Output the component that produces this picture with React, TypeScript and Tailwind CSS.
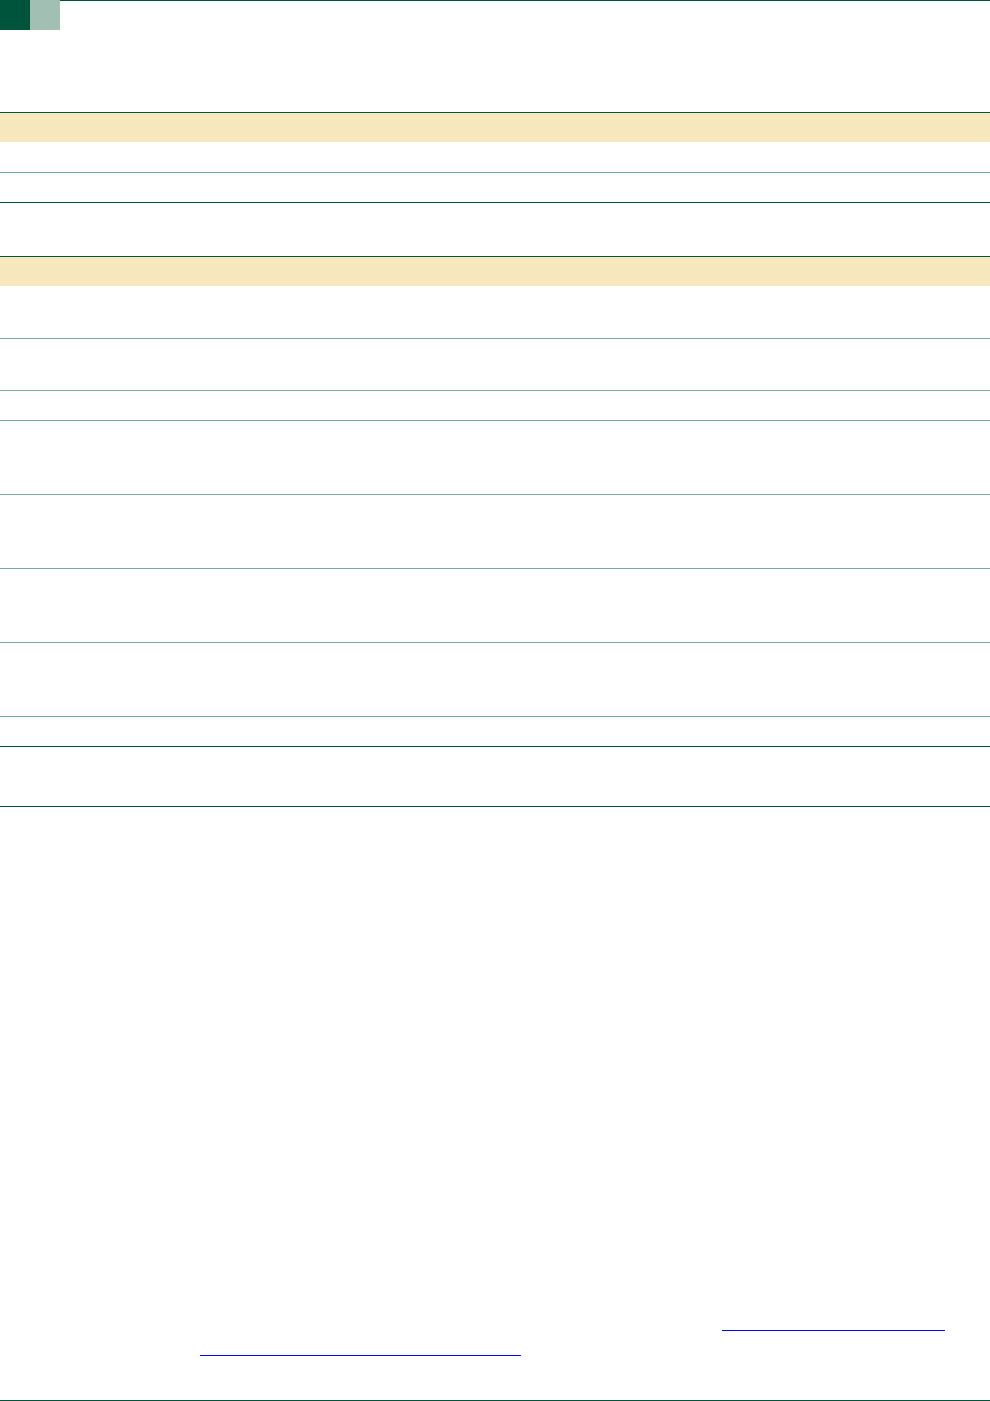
import React from 'react';

// Blank report sheet: header tabs, two ruled tables, footer links.

const Header: React.FC = () => (
    <div className="flex h-[30px]">
        <div className="w-[30px] h-[30px] bg-[#00543b]" />
        <div className="w-[30px] h-[30px] bg-[#a2bfb3]" />
        <div className="flex-1 border-t border-[#00543b]" />
    </div>
);

interface RowProps {
    height: string;
    last?: boolean;
}

const Row: React.FC<RowProps> = ({ height, last }) => (
    <div className={`${height} ${last ? '' : 'border-b border-[#7eaa98]'}`} />
);

export default function App() {
    return (
        <div className="w-[990px] bg-white font-['Liberation_Sans',Arial,sans-serif]">
            <Header />

            {/* Summary table */}
            <div className="mt-[82px] border-y border-[#00543b]">
                <div className="h-[29px] bg-[#f6e7bd]" />
                <Row height="h-[31px]" />
                <Row height="h-[29px]" last />
            </div>

            {/* Detail table */}
            <div className="mt-[53px] border-t border-[#00543b]">
                <div className="h-[29px] bg-[#f6e7bd]" />
                <Row height="h-[53px]" />
                <Row height="h-[52px]" />
                <Row height="h-[30px]" />
                <Row height="h-[74px]" />
                <Row height="h-[74px]" />
                <Row height="h-[74px]" />
                <Row height="h-[74px]" />
                <Row height="h-[29px]" last />
                <div className="h-[61px] border-y border-[#00543b]" />
            </div>

            {/* Footer links */}
            <div className="mt-[523px]">
                <div className="ml-[722px] w-[223px] h-px bg-[#0000ff]" />
                <div className="mt-[24px] ml-[200px] w-[321px] h-px bg-[#0000ff]" />
            </div>

            <div className="mt-[44px] h-px bg-[#00543b]" />
        </div>
    );
}
